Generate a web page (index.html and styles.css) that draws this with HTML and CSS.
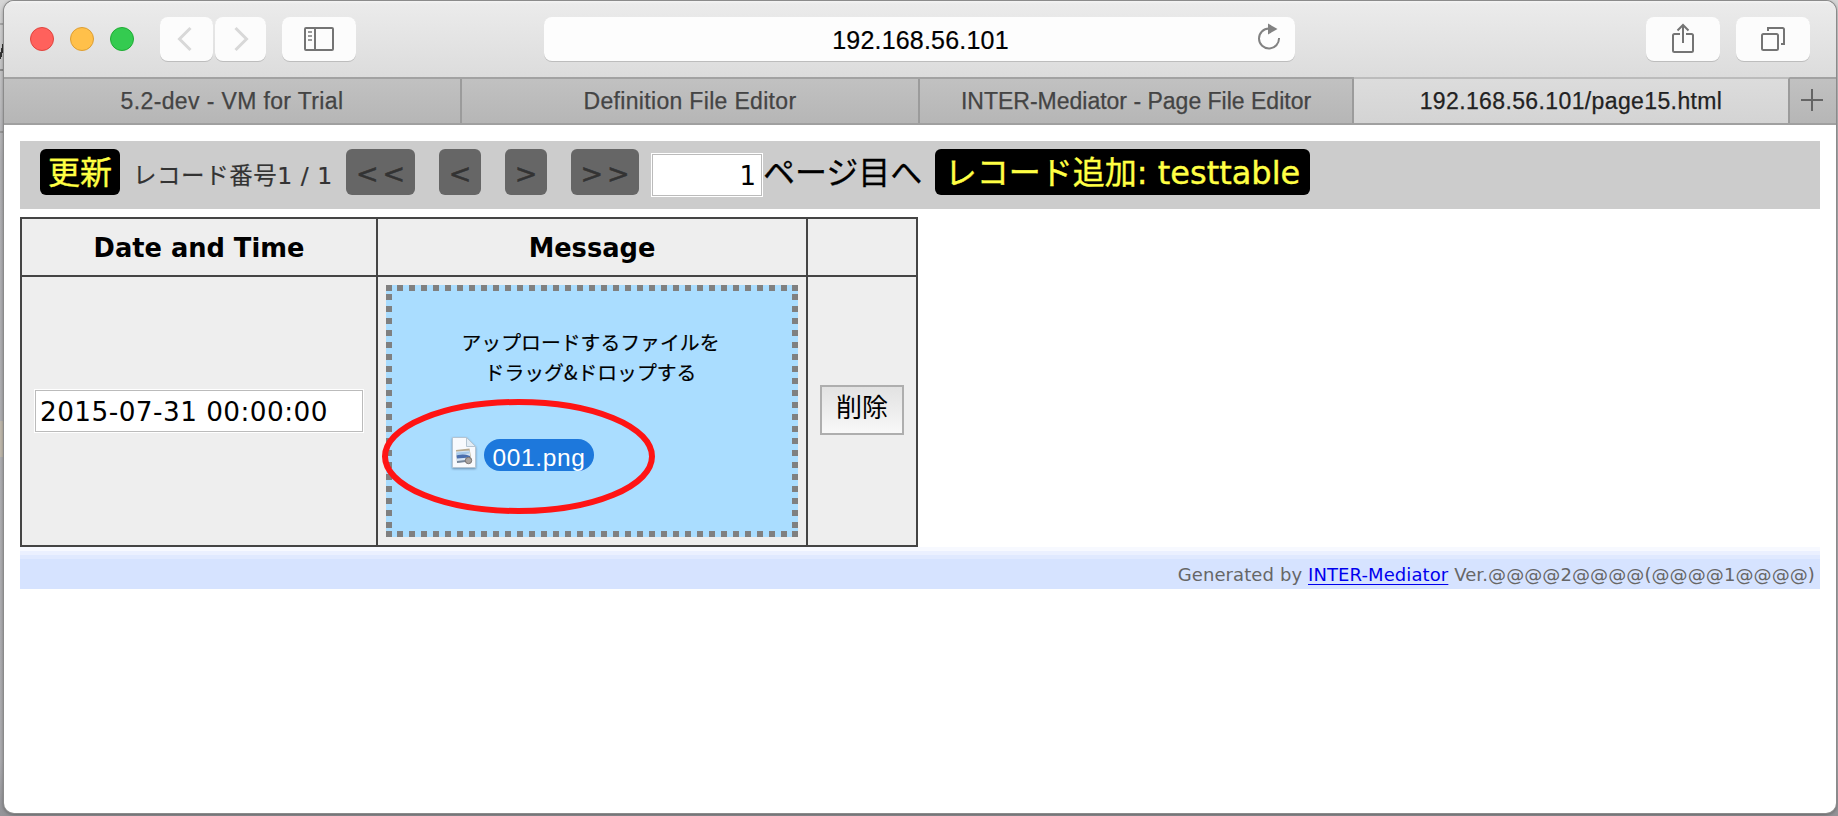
FILE: index.html
```html
<!DOCTYPE html>
<html lang="ja">
<head>
<meta charset="utf-8">
<title>192.168.56.101/page15.html</title>
<link rel="stylesheet" href="styles.css">
</head>
<body>
<div class="window">
  <header class="toolbar">
    <div class="lights"><i class="light red"></i><i class="light amber"></i><i class="light green"></i></div>
    <div class="history">
      <button class="tool back"><svg width="16" height="26" viewBox="0 0 16 26"><path d="M13.500 2L2.500 13L13.500 24"/></svg></button>
      <button class="tool forward"><svg width="16" height="26" viewBox="0 0 16 26"><path d="M2.500 2L13.500 13L2.500 24"/></svg></button>
    </div>
    <button class="tool sidebar"><svg width="30" height="24" viewBox="0 0 30 24"><rect x="1" y="1" width="28" height="22" rx="1"/><path d="M11 1v22"/><path class="thin" d="M4 5h4M4 9h4M4 13h4"/></svg></button>
    <div class="address"><span class="url">192.168.56.101</span>
      <svg class="reload" width="24" height="28" viewBox="0 0 24 28"><path d="M12 6.500A10 10 0 1 0 22 16"/><path class="head" d="M11 1.500L20.500 7L11 12.500z"/></svg>
    </div>
    <button class="tool share"><svg width="24" height="32" viewBox="0 0 24 32"><path d="M9 12H3.500Q2 12 2 13.500V28.500Q2 30 3.500 30H20.500Q22 30 22 28.500V13.500Q22 12 20.500 12H15M12 21V3M6.500 8.500L12 3L17.500 8.500"/></svg></button>
    <button class="tool overview"><svg width="26" height="26" viewBox="0 0 26 26"><rect x="2" y="8" width="16" height="16" rx="1.500"/><path d="M8 5V2H22.500Q24 2 24 3.500V18H21"/></svg></button>
  </header>
  <nav class="tabs">
    <div class="tab t1"><span>5.2-dev - VM for Trial</span></div>
    <div class="tab t2"><span>Definition File Editor</span></div>
    <div class="tab t3"><span>INTER-Mediator - Page File Editor</span></div>
    <div class="tab t4 active"><span>192.168.56.101/page15.html</span></div>
    <div class="tab plus"><svg width="22" height="22" viewBox="0 0 22 22"><path d="M11 0v22M0 11h22"/></svg></div>
  </nav>
  <main class="page">
    <div class="navigator">
      <span class="btn update">更新</span>
      <span class="info">レコード番号1 / 1</span>
      <span class="btn off first">&lt;&lt;</span>
      <span class="btn off prev">&lt;</span>
      <span class="btn off next">&gt;</span>
      <span class="btn off last">&gt;&gt;</span>
      <span class="field num">1</span>
      <span class="jump">ページ目へ</span>
      <span class="btn add">レコード追加: testtable</span>
    </div>
    <table class="records">
      <colgroup><col class="c1"><col class="c2"><col class="c3"></colgroup>
      <tr class="headrow"><th>Date and Time</th><th>Message</th><th></th></tr>
      <tr class="row">
        <td><div class="field date">2015-07-31 00:00:00</div></td>
        <td>
          <div class="drop">
            <p class="hint">アップロードするファイルを<br>ドラッグ&amp;ドロップする</p>
            <div class="file">
              <svg class="doc" width="24" height="32" viewBox="0 0 24 32">
                <path class="sheet" d="M.500 .500H14.500L23.500 9.500V30.500H.500z"/>
                <path class="fold" d="M14.500 .500V9.500H23.500z"/>
                <path d="M4 13L17.500 11.500L19.500 23L5 26z" fill="#b7a98e"/>
                <path d="M4 14.500L17.500 13.500L19 24L5 26z" fill="#d5e4f3"/>
                <path d="M4.500 18.500Q11 16 18 19V20.500L5 21.500z" fill="#4b6fae"/>
                <path d="M4.500 15.500L17.500 14.500V16.500L4.500 18z" fill="#a9cbea"/>
                <path d="M5 24L18 22.500V24.500L5 26z" fill="#75869a"/>
                <circle cx="16.500" cy="23.500" r="3.200" fill="#aaa5a2" stroke="#77716f"/>
              </svg>
              <span class="pill">001.png</span>
            </div>
            <svg class="ring" width="274" height="116" viewBox="0 0 274 116"><ellipse cx="136.500" cy="57.500" rx="133.500" ry="54.500"/></svg>
          </div>
        </td>
        <td><button class="delete">削除</button></td>
      </tr>
    </table>
    <footer class="credit"><span>Generated by <a href="#">INTER-Mediator</a> Ver.@@@@2@@@@(@@@@1@@@@)</span></footer>
  </main>
</div>
</body>
</html>
```

FILE: styles.css
```css
* { box-sizing: border-box; }

body {
  margin: 0;
  height: 816px;
  padding: 1px 2px 3px 4px;
  overflow: hidden;
  font-family: "DejaVu Sans", "Noto Sans CJK JP", sans-serif;
  background:
    linear-gradient(104deg, transparent 35%, #333 36% 62%, transparent 63%) 0 43px / 4px 16px no-repeat,
    linear-gradient(#a9a9a9, #a9a9a9) 0 23px / 4px 2px no-repeat,
    linear-gradient(#8e8e8e, #8e8e8e) 0 69px / 4px 2px no-repeat,
    linear-gradient(#999, #999) 0 131px / 4px 2px no-repeat,
    linear-gradient(#c2bbae, #c2bbae) 0 421px / 4px 36px no-repeat,
    linear-gradient(#d6d6d6, #b2b2b5 160px, #aeaeb2 760px, #949498);
}

.window {
  height: 812px;
  display: flex;
  flex-direction: column;
  overflow: hidden;
  border-radius: 10px;
  background: #fff;
  box-shadow: 0 0 0 1px #8b8b8b, 0 1px 4px rgba(0, 0, 0, .5);
}

.toolbar {
  height: 76px;
  padding: 16px 26px 0 26px;
  display: flex;
  align-items: flex-start;
  background: linear-gradient(#f4f4f4, #ebebeb 3px, #dcdcdc);
}

.lights { display: flex; gap: 16px; margin: 10px 26px 0 0; }
.light { width: 24px; height: 24px; border-radius: 50%; border: 1px solid; }
.red { background: #ff615c; border-color: #e0443e; }
.amber { background: #ffc04a; border-color: #dd9e33; }
.green { background: #34cb50; border-color: #1fac34; }

.history { display: flex; gap: 2px; margin-right: 16px; }

.tool {
  width: 74px;
  height: 44px;
  padding: 0;
  border: 0;
  border-radius: 8px;
  display: flex;
  align-items: center;
  justify-content: center;
  background: #fcfcfc;
  box-shadow: 0 1px 0 #bdbdbd;
}
.tool svg { fill: none; stroke: #747474; stroke-width: 2; }
.back { width: 53px; padding-right: 4px; }
.forward { width: 51px; }
.history .tool svg { stroke: #d8d8d8; stroke-width: 3; }
.tool .thin { stroke: #9a9a9a; }

.address {
  width: 751px;
  height: 44px;
  margin-left: 188px;
  padding-right: 14px;
  display: flex;
  align-items: center;
  border-radius: 8px;
  background: #fdfdfd;
  box-shadow: 0 1px 0 #bdbdbd;
}
.url {
  flex: 1;
  padding: 1px 0 0 40px;
  text-align: center;
  font: 25px/30px "Liberation Sans", sans-serif;
  letter-spacing: .200px;
  -webkit-text-stroke: .200px;
}
.reload { fill: none; stroke: #828282; stroke-width: 2; margin-top: -6px; }
.reload .head { fill: #828282; stroke: none; }
.share { margin-left: 351px; }
.share svg { margin-top: -2px; }
.overview { margin-left: 16px; }

.tabs {
  height: 48px;
  display: flex;
  border-top: 2px solid #a2a2a2;
  border-bottom: 2px solid #a0a0a0;
  background: linear-gradient(#c1c1c1, #b6b6b6);
}
.tab {
  display: flex;
  align-items: center;
  justify-content: center;
  border-right: 2px solid #9b9b9b;
  font: 23px/28px "Liberation Sans", sans-serif;
  color: #444;
  white-space: nowrap;
  -webkit-text-stroke: .250px;
}
.t1 { width: 458px; letter-spacing: .370px; }
.t2 { width: 458px; letter-spacing: .320px; }
.t3 { width: 434px; }
.t4 { width: 436px; letter-spacing: .380px; }
.active { margin-top: -2px; border-top: 2px solid #bcbcbc; background: linear-gradient(#dcdcdc, #d4d4d4); color: #222; }
.plus { flex: 1; border: 0; padding: 0 2px 2px 0; }
.plus svg { stroke: #656565; stroke-width: 2; }

.page { flex: 1; padding: 16px; }

.navigator {
  height: 68px;
  padding: 8px 20px;
  display: flex;
  align-items: flex-start;
  background: #ccc;
  white-space: nowrap;
}
.btn {
  height: 46px;
  border-radius: 6px;
  font-size: 32px;
  line-height: 48px;
  text-align: center;
  background: #000;
  color: #ff4;
  -webkit-text-stroke: .400px;
}
.off { background: #666; color: #333; font-size: 27px; line-height: 50px; -webkit-text-stroke: .500px; }
.update { width: 80px; margin-right: 13px; }
.info { width: 203px; margin-right: 10px; font-size: 23.500px; line-height: 54px; letter-spacing: .550px; color: #333; -webkit-text-stroke: .200px; }
.first { width: 69px; margin-right: 24px; padding-left: 4px; letter-spacing: 4px; }
.prev { width: 42px; margin-right: 24px; }
.next { width: 42px; margin-right: 24px; }
.last { width: 68px; margin-right: 12px; padding-left: 4px; letter-spacing: 4px; }
.field {
  height: 44px;
  border: 1px solid #fff;
  outline: 1px solid #bbb;
  outline-offset: -2px;
  background: #fff;
  color: #000;
  line-height: 43px;
}
.num { width: 112px; margin-top: 4px; padding-right: 6px; text-align: right; font-size: 26px; line-height: 45px; }
.jump { width: 172px; font-size: 32px; line-height: 48px; -webkit-text-stroke: .300px; }
.add { width: 375px; }

.records {
  width: 898px;
  height: 330px;
  margin-top: 8px;
  border-collapse: collapse;
  table-layout: fixed;
}
.c1 { width: 356px; }
.c2 { width: 430px; }
.c3 { width: 110px; }
.records th, .records td { border: 2px solid #444; padding: 0; background: #eee; }
.headrow { height: 58px; }
.records th { padding-top: 2px; font-size: 25.700px; line-height: 40px; }
.row { height: 270px; }
.date { width: 330px; margin-left: 12px; padding-left: 5px; font-size: 26.300px; letter-spacing: .450px; line-height: 44px; }

.drop {
  position: relative;
  width: 412px;
  height: 252px;
  margin: 0 auto;
  padding-top: 42px;
  background:
    linear-gradient(#808080, #808080) 0 0 / 6px 6px no-repeat,
    linear-gradient(#808080, #808080) 100% 0 / 6px 6px no-repeat,
    linear-gradient(#808080, #808080) 0 100% / 6px 6px no-repeat,
    linear-gradient(#808080, #808080) 100% 100% / 6px 6px no-repeat,
    linear-gradient(90deg, #808080 50%, transparent 50%) 11px 0 / 12px 6px repeat-x,
    linear-gradient(90deg, #808080 50%, transparent 50%) 11px 100% / 12px 6px repeat-x,
    linear-gradient(#808080 50%, transparent 50%) 0 9px / 6px 12px repeat-y,
    linear-gradient(#808080 50%, transparent 50%) 100% 9px / 6px 12px repeat-y,
    #adf;
}
.hint { margin: 0 3px 0 0; text-align: center; font-family: "Noto Sans CJK JP", sans-serif; font-size: 19.850px; line-height: 30px; -webkit-text-stroke: .200px; }
.file { display: flex; align-items: flex-start; margin: 49px 0 0 66px; }
.doc { margin-top: 1px; filter: drop-shadow(0 1px 1px rgba(60, 90, 120, .6)); }
.sheet { fill: #f8fafd; stroke: #b5c5d2; }
.fold { fill: #e3edf5; stroke: #b5c5d2; }
.pill {
  width: 110px;
  height: 32px;
  margin: 3px 0 0 8px;
  border-radius: 16px;
  background: #1d78dc;
  color: #fff;
  text-align: center;
  font: 24.500px/37px "Liberation Sans", sans-serif;
  letter-spacing: .600px;
}
.ring { position: absolute; left: -4px; top: 114px; fill: none; stroke: #ff1414; stroke-width: 6; }

.delete {
  display: block;
  width: 84px;
  height: 50px;
  margin: 0 0 2px 12px;
  padding: 0 0 8px;
  border: 2px solid #aeaeae;
  background: linear-gradient(#e2e2e2, #f8f8f8);
  font: 26px/36px "Noto Sans CJK JP", sans-serif;
  color: #000;
}

.credit {
  height: 42px;
  padding: 15px 5px 0 0;
  text-align: right;
  font-size: 18px;
  line-height: 26px;
  letter-spacing: .100px;
  color: #666;
  background: linear-gradient(#f7f9ff 4px, #ebf0ff 4px 8px, #e0e9ff 8px 12px, #d6e3ff 12px);
}
.credit a { color: #00e; text-underline-offset: 3px; }
```
